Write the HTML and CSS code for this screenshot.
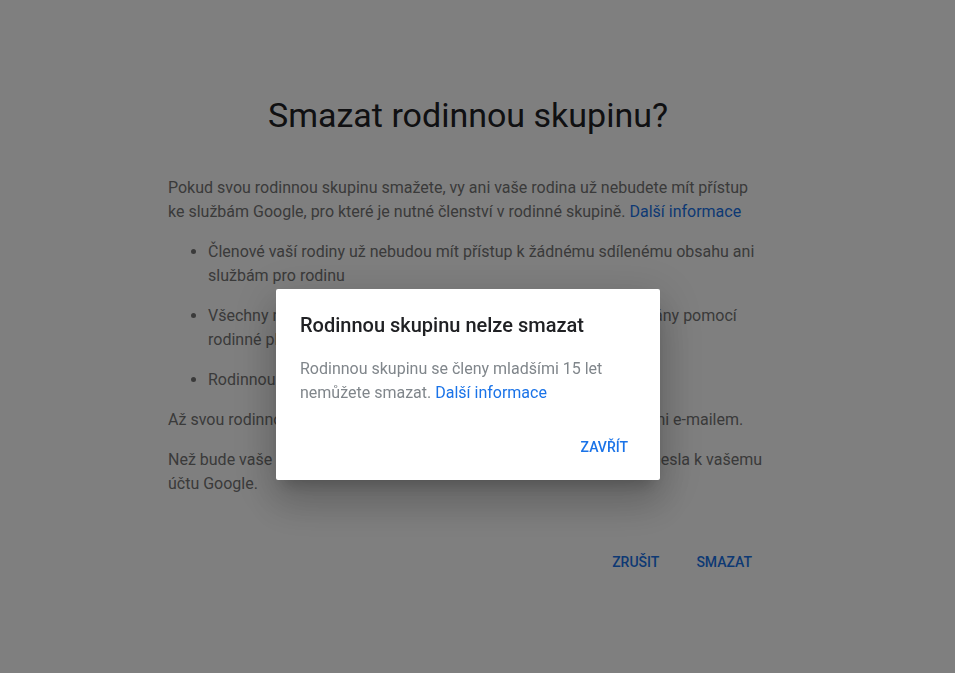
FILE: index.html
```html
<!DOCTYPE html>
<html lang="cs">
<head>
  <meta charset="UTF-8" />
  <meta name="viewport" content="width=device-width, initial-scale=1.0" />
  <title>Smazat rodinnou skupinu?</title>
  <link rel="stylesheet" href="styles.css">
</head>
<body>
  <main class="page">
    <h1>Smazat rodinnou skupinu?</h1>
    <p>Pokud svou rodinnou skupinu smažete, vy ani vaše rodina už nebudete mít přístup ke službám Google, pro které je nutné členství v rodinné skupině. <a href="#">Další informace</a></p>
    <ul>
      <li>Členové vaší rodiny už nebudou mít přístup k žádnému sdílenému obsahu ani službám pro rodinu</li>
      <li>Všechny nákupy, předplatná a služby, které byly dosud financovány pomocí rodinné platební metody, budou zrušeny</li>
      <li>Rodinnou skupinu už nebude možné obnovit</li>
    </ul>
    <p>Až svou rodinnou skupinu smažete, všichni členové budou informováni e-mailem.</p>
    <p>Než bude vaše rodinná skupina smazána, budete požádáni o zadání hesla k vašemu účtu Google.</p>
    <div class="actions">
      <button class="text-btn">Zrušit</button>
      <button class="text-btn">Smazat</button>
    </div>
  </main>

  <div class="overlay">
    <div class="dialog">
      <h2>Rodinnou skupinu nelze smazat</h2>
      <p>Rodinnou skupinu se členy mladšími 15 let nemůžete smazat. <a href="#">Další informace</a></p>
      <div class="dialog-actions">
        <button class="text-btn">Zavřít</button>
      </div>
    </div>
  </div>
</body>
</html>
```

FILE: styles.css
```css
body {
  font-family: Roboto, "Noto Sans", Arial, sans-serif;
  margin: 0;
  padding: 0 19px 0 0;
  background-color: #fff;
  color: #757575;
  font-size: 16px;
  line-height: 24px;
}
a {
  color: #1a73e8;
  text-decoration: none;
}
.page {
  width: 600px;
  margin: 0 auto;
  padding-top: 95px;
}
h1 {
  margin: 0 0 41px;
  text-align: center;
  font-size: 34px;
  line-height: 40px;
  font-weight: 400;
  color: #202124;
}
.page p {
  margin: 0 0 16px;
}
ul {
  margin: 0 0 16px;
  padding-left: 40px;
}
li {
  margin-bottom: 16px;
}
.actions {
  display: flex;
  justify-content: flex-end;
  gap: 5px;
  margin-top: 48px;
}
.text-btn {
  height: 36px;
  padding: 0 16px;
  border: none;
  background: none;
  font-family: Roboto, "Noto Sans", Arial, sans-serif;
  font-size: 14px;
  font-weight: 500;
  text-transform: uppercase;
  color: #1a73e8;
}
.overlay {
  position: fixed;
  inset: 0;
  background-color: rgba(0, 0, 0, 0.5);
  display: flex;
  justify-content: center;
  align-items: flex-start;
  padding: 289px 19px 0 0;
}
.dialog {
  width: 384px;
  box-sizing: border-box;
  padding: 22px 0 15px;
  background-color: #fff;
  border-radius: 2px;
  box-shadow: 0 11px 15px -7px rgba(0, 0, 0, 0.2), 0 24px 38px 3px rgba(0, 0, 0, 0.14), 0 9px 46px 8px rgba(0, 0, 0, 0.12);
}
.dialog h2 {
  margin: 0 24px 18px;
  font-size: 20px;
  line-height: 28px;
  font-weight: 500;
  color: #202124;
}
.dialog p {
  margin: 0 24px;
  color: #80868b;
}
.dialog-actions {
  display: flex;
  justify-content: flex-end;
  padding: 24px 24px 0;
}
.dialog-actions .text-btn {
  padding: 0 8px;
}
```
